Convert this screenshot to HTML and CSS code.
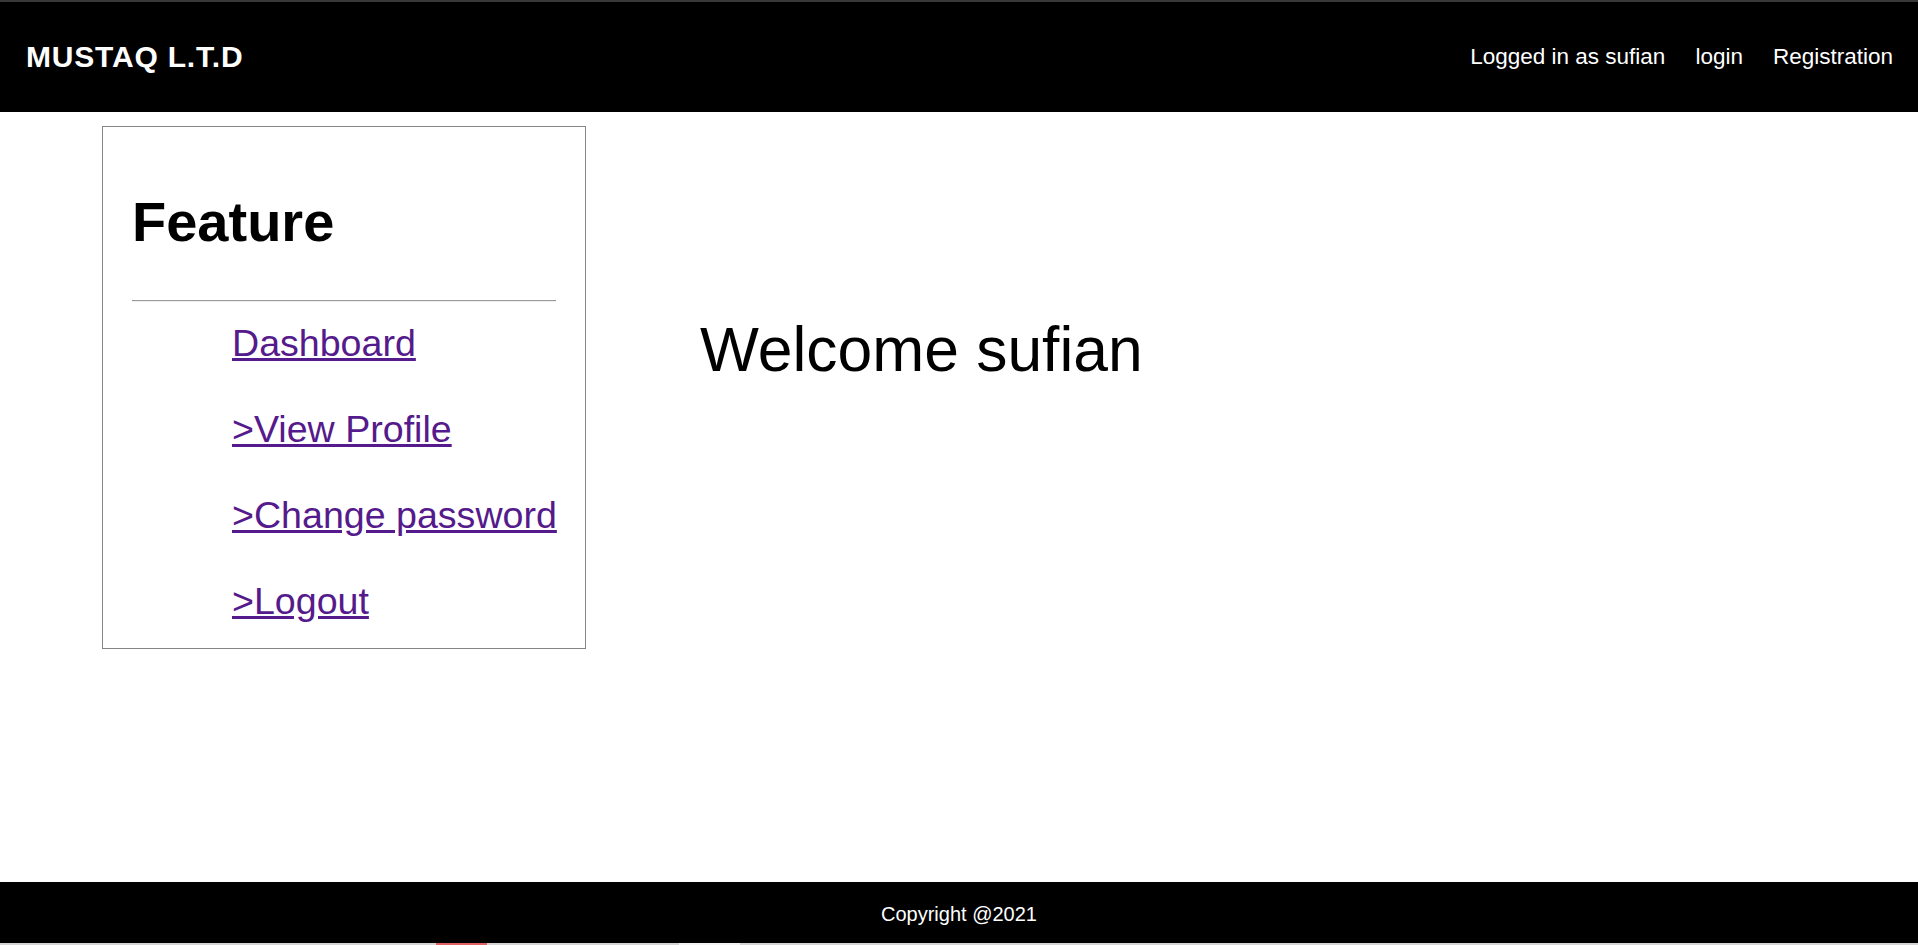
FILE: index.html
```html
<!DOCTYPE html>
<html lang="en">
<head>
<meta charset="utf-8">
<title>MUSTAQ L.T.D</title>
<link rel="stylesheet" href="styles.css">
</head>
<body>
<div class="page">
  <div class="topline"></div>
  <header class="header">
    <div class="brand">MUSTAQ L.T.D</div>
    <nav class="nav">
      <span class="nav-item">Logged in as sufian</span>
      <a class="nav-item" href="#login">login</a>
      <a class="nav-item" href="#registration">Registration</a>
    </nav>
  </header>
  <main class="main">
    <aside class="sidebar">
      <h1 class="sidebar-title">Feature</h1>
      <hr class="sidebar-rule">
      <ul class="menu">
        <li><a class="menu-link" href="#dashboard">Dashboard</a></li>
        <li><a class="menu-link" href="#profile">&gt;View Profile</a></li>
        <li><a class="menu-link" href="#password">&gt;Change password</a></li>
        <li><a class="menu-link" href="#logout">&gt;Logout</a></li>
      </ul>
    </aside>
    <section class="content">
      <h2 class="welcome">Welcome sufian</h2>
    </section>
  </main>
  <footer class="footer">Copyright @2021</footer>
  <div class="bottomline">
    <span class="seg seg-a"></span>
    <span class="seg seg-red"></span>
    <span class="seg seg-b"></span>
    <span class="seg seg-light"></span>
    <span class="seg seg-c"></span>
  </div>
</div>
</body>
</html>
```

FILE: styles.css
```css
* { box-sizing: border-box; }

html, body {
  margin: 0;
  padding: 0;
  background: #fff;
}

body {
  font-family: "Liberation Sans", Arial, sans-serif;
  color: #000;
}

.page {
  height: 945px;
  display: flex;
  flex-direction: column;
  overflow: hidden;
}

.topline {
  height: 2px;
  background: #383838;
  flex: none;
}

.header {
  flex: none;
  height: 110px;
  background: #000;
  color: #fff;
  display: flex;
  align-items: center;
  justify-content: space-between;
  padding: 0 25px 0 26px;
}

.brand {
  font-size: 30px;
  font-weight: bold;
  letter-spacing: 0.8px;
}

.nav {
  display: flex;
  gap: 30px;
  font-size: 22.5px;
}

.nav-item {
  color: #fff;
  text-decoration: none;
}

.main {
  flex: 1;
  display: flex;
  align-items: flex-start;
  padding: 14px 0 0 102px;
  gap: 114px;
}

.sidebar {
  width: 484px;
  border: 1px solid #858585;
  padding: 63px 29px 26px 29px;
}

.sidebar-title {
  margin: 0;
  font-size: 56px;
  line-height: 63px;
  font-weight: bold;
}

.sidebar-rule {
  margin: 47px 0 0 0;
  height: 0;
  border: 0;
  border-top: 1px solid #9a9a9a;
  border-bottom: 1px solid #eeeeee;
}

.menu {
  list-style: none;
  margin: 20px 0 0 0;
  padding: 0 0 0 100px;
}

.menu li {
  font-size: 37.6px;
  line-height: 42px;
  margin-bottom: 44px;
}

.menu li:last-child {
  margin-bottom: 0;
}

.menu-link {
  color: #551a8b;
  text-decoration: underline;
  white-space: nowrap;
}

.content {
  padding-top: 188px;
}

.welcome {
  margin: 0;
  font-size: 62.4px;
  font-weight: normal;
  line-height: 71px;
}

.footer {
  flex: none;
  height: 61px;
  background: #000;
  color: #fff;
  font-size: 20px;
  display: flex;
  align-items: center;
  justify-content: center;
  padding-top: 3px;
}

.bottomline {
  flex: none;
  height: 2px;
  display: flex;
}

.seg { height: 2px; }
.seg-a { width: 436px; background: #d4d4d4; }
.seg-red { width: 51px; background: #e06262; }
.seg-b { width: 192px; background: #d4d4d4; }
.seg-light { width: 61px; background: #f2f2f2; }
.seg-c { flex: 1; background: #d4d4d4; }
```
